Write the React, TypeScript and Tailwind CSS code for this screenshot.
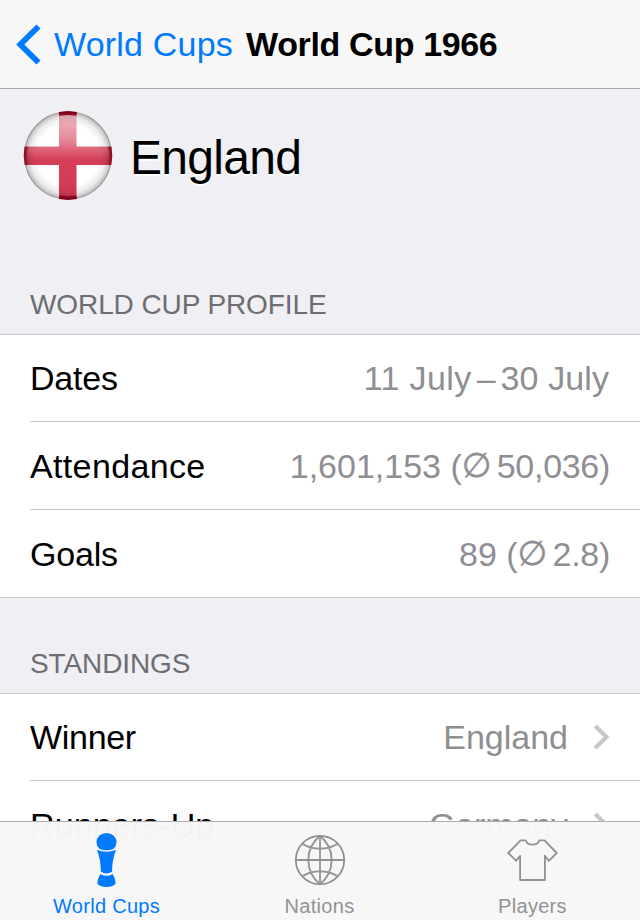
import type { ReactNode } from "react";

const STANDINGS = [
  { label: "Winner", value: "England", labelFit: "tracking-[-0.3px]", valueFit: "" },
  { label: "Runners-Up", value: "Germany", labelFit: "tracking-[0.1px]", valueFit: "tracking-[-0.1px]" },
  { label: "Third Place", value: "Portugal", labelFit: "text-black/40", valueFit: "text-black/20" },
];

function BackChevron() {
  return (
    <svg width="26" height="42" viewBox="0 0 26 42" fill="none" className="shrink-0">
      <path d="M23.500 3.500 5.300 21.500 23.500 39.500" stroke="#007aff" strokeWidth="5.800" />
    </svg>
  );
}

function DisclosureChevron() {
  return (
    <svg width="17" height="26" viewBox="0 0 17 26" fill="none" className="-mr-px ml-[25px] shrink-0">
      <path d="M2.200 1.900 13.500 13 2.200 24.100" stroke="#c7c7cc" strokeWidth="4.200" />
    </svg>
  );
}

/* Glossy round St George's flag */
function EnglandFlag() {
  return (
    <svg width="90" height="90" viewBox="0 0 90 90" className="shrink-0">
      <defs>
        <clipPath id="flag-clip">
          <circle cx="45" cy="44.500" r="44.300" />
        </clipPath>
        <radialGradient id="flag-edge" cx="0.5" cy="0.5" r="0.5">
          <stop offset="0.7" stopColor="#000" stopOpacity="0" />
          <stop offset="0.86" stopColor="#000" stopOpacity="0.08" />
          <stop offset="0.95" stopColor="#000" stopOpacity="0.22" />
          <stop offset="1" stopColor="#000" stopOpacity="0.5" />
        </radialGradient>
        <linearGradient id="flag-gloss" x1="0" y1="0" x2="0" y2="1">
          <stop offset="0" stopColor="#fff" stopOpacity="0.68" />
          <stop offset="0.3" stopColor="#fff" stopOpacity="0.48" />
          <stop offset="0.55" stopColor="#fff" stopOpacity="0.14" />
          <stop offset="1" stopColor="#fff" stopOpacity="0.12" />
        </linearGradient>
      </defs>
      <g clipPath="url(#flag-clip)">
        <rect width="90" height="90" fill="#fff" />
        <path d="M36 0h17.500v35.500H90V54H53.500v36H36V54H0V35.500h36z" fill="#cf1f3c" />
        <path d="M36 0h17.500v4H36zM36 85h17.500v4H36z" fill="#b00826" />
        <ellipse cx="45" cy="44.500" rx="41" ry="40.500" fill="url(#flag-gloss)" />
        <circle cx="45" cy="44.500" r="44.500" fill="url(#flag-edge)" />
      </g>
    </svg>
  );
}

function TrophyIcon() {
  return (
    <svg width="22" height="56" viewBox="0 0 22 56" fill="#007aff" className="relative left-[-0.500px]">
      <path d="M4.300 16.800A10 9.400 0 1 1 18.700 16.800Q11.500 19.800 4.300 16.800z" />
      <path d="M2 17.700Q11.500 22 21 17.700C19 24 17.200 29 17.100 39.700Q11.500 43.300 5.900 39.700C5.800 29 4 24 2 17.700z" />
      <path d="M5.400 42Q11.500 45.700 17.600 42C19.200 45 20.600 48 20.600 51.500Q18.500 54.900 11.500 54.900T2.400 51.500C2.400 48 3.800 45 5.400 42z" />
    </svg>
  );
}

function GlobeIcon() {
  return (
    <svg width="52" height="52" viewBox="0 0 52 52" fill="none" stroke="#929292" strokeWidth="1.800">
      <circle cx="26" cy="26" r="24.200" />
      <path d="M26 2v48M2 26h48" />
      <path d="M26 2C10.500 14 10.500 38 26 50M26 2C41.500 14 41.500 38 26 50" />
      <path d="M8.500 9.700C18 16.200 34 16.200 43.500 9.700M8.500 42.300C18 35.800 34 35.800 43.500 42.300" />
    </svg>
  );
}

function ShirtIcon() {
  return (
    <svg width="52" height="44" viewBox="0 0 52 44" fill="none" stroke="#929292" strokeWidth="1.800" strokeLinejoin="round">
      <path d="M13.500 2.400H18.800C20.500 8 30.500 8 32.200 2.400H37.500L49.800 15 41.800 22.800 37.900 17.800V42H13.100V17.800L9.200 22.800 1.200 15z" />
    </svg>
  );
}

function SectionHeader({ children }: { children: ReactNode }) {
  return (
    <h2 className="flex h-24 items-end border-b border-[#c8c7cc] pb-[13px] pl-[30px] text-[28px] leading-8 tracking-[-0.1px] text-[#6d6d72]">
      {children}
    </h2>
  );
}

type RowProps = {
  label: ReactNode;
  children: ReactNode;
  first?: boolean;
  last?: boolean;
};

function Row({ label, children, first = false, last = false }: RowProps) {
  const inner = (
    <>
      <span>{label}</span>
      <span className="flex items-center whitespace-pre text-[#8e8e93]">{children}</span>
    </>
  );

  // The separator is inset, except below the last row of a group
  if (last) {
    return (
      <div className="flex h-[88px] items-center justify-between border-b border-[#c8c7cc] pr-[31px] pl-[30px]">
        {inner}
      </div>
    );
  }
  return (
    <div
      className={
        first
          ? "ml-[30px] flex h-[87px] items-center justify-between border-b border-[#c8c7cc] pr-[31px]"
          : "ml-[30px] flex h-[88px] items-center justify-between border-b border-[#c8c7cc] pr-[31px]"
      }
    >
      {inner}
    </div>
  );
}

function Average({ value }: { value: string }) {
  return (
    <>
      (<span className="relative top-[-1px] w-7 font-['DejaVu_Sans'] text-[34px] [-webkit-text-stroke:0.5px_#8e8e93]">∅</span>
      <span className="-mr-px ml-[7px] tracking-[-0.3px]">{value})</span>
    </>
  );
}

type TabProps = { icon: ReactNode; label: string; active?: boolean };

function Tab({ icon, label, active = false }: TabProps) {
  return (
    <div className="flex w-[213px] flex-col items-center tracking-[0.3px]">
      <div className="flex h-[76px] items-center justify-center">{icon}</div>
      <span className={active ? "text-xl leading-4 text-[#007aff]" : "text-xl leading-4 text-[#929292]"}>{label}</span>
    </div>
  );
}

export default function App() {
  return (
    <div className="relative flex h-[920px] w-[640px] flex-col overflow-hidden bg-[#efeff4] font-['Liberation_Sans',Arial,sans-serif] text-[34px] leading-10 text-black">
      <header className="flex h-[89px] shrink-0 items-center border-b border-[#a7a7aa] bg-[#f7f7f7] pl-[15px] whitespace-nowrap">
        <BackChevron />
        <span className="ml-[13px] tracking-[0.2px] text-[#007aff]">World Cups</span>
        <h1 className="ml-[13px] font-bold tracking-[-0.35px]">World Cup 1966</h1>
      </header>

      <main className="shrink-0">
        <div className="flex h-[150px] items-start pt-[22px] pl-[23px]">
          <EnglandFlag />
          <span className="mt-[21px] ml-[17px] text-[48px] leading-[52px] tracking-[-0.7px] [text-shadow:0_2px_0_#fff]">
            England
          </span>
        </div>

        <SectionHeader>WORLD CUP PROFILE</SectionHeader>
        <section className="bg-white">
          <Row label={<span className="tracking-[-0.2px]">Dates</span>} first>
            <span className="tracking-[0.4px]">11 July</span>
            <span className="mx-[5px]">–</span>
            <span className="tracking-[0.1px]">30 July</span>
          </Row>
          <Row label={<span className="tracking-[0.35px]">Attendance</span>}>
            <span>1,601,153 </span>
            <Average value="50,036" />
          </Row>
          <Row label={<span className="tracking-[-0.2px]">Goals</span>} last>
            89 <Average value="2.8" />
          </Row>
        </section>

        <SectionHeader>STANDINGS</SectionHeader>
        <section className="bg-white">
          {STANDINGS.map((row, idx) => (
            <Row key={row.label} label={<span className={row.labelFit}>{row.label}</span>} first={idx === 0}>
              <span className={row.valueFit}>{row.value}</span>
              <DisclosureChevron />
            </Row>
          ))}
        </section>
      </main>

      <nav className="absolute inset-x-0 bottom-0 flex h-[99px] border-t border-[#adadad] bg-[#f7f7f7]/[0.985]">
        <Tab icon={<TrophyIcon />} label="World Cups" active />
        <Tab icon={<GlobeIcon />} label="Nations" />
        <Tab icon={<ShirtIcon />} label="Players" />
      </nav>
    </div>
  );
}
